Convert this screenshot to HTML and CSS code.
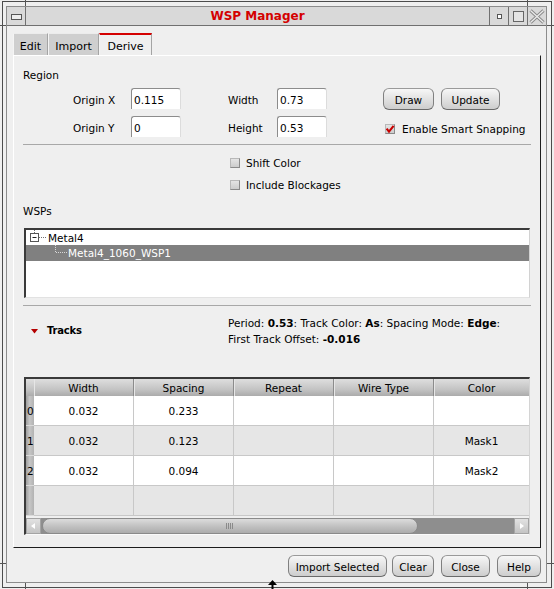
FILE: index.html
```html
<!DOCTYPE html>
<html>
<head>
<meta charset="utf-8">
<title>WSP Manager</title>
<link rel="stylesheet" href="styles.css">
</head>
<body>
<div class="frame">
  <div class="inner">
    <div class="titlebar">
      <div class="tb-btn tb-menu"><span class="menu-ico"></span></div>
      <div class="title">WSP Manager</div>
      <div class="tb-btn tb-side"><span class="min-ico"></span></div>
      <div class="tb-btn tb-side"><span class="max-ico"></span></div>
      <div class="tb-btn tb-side">
        <svg class="close-ico" width="16" height="15" viewBox="0 0 16 15">
          <path d="M1.5 1.5 L14.5 13.5 M14.5 1.5 L1.5 13.5" stroke="#8a8a8a" stroke-width="3.2" fill="none"/>
          <path d="M1.5 1.5 L14.5 13.5 M14.5 1.5 L1.5 13.5" stroke="#ececec" stroke-width="1.2" fill="none"/>
        </svg>
      </div>
    </div>

    <div class="content">
      <div class="tabs">
        <div class="tab tab-edit">Edit</div>
        <div class="tab tab-import">Import</div>
        <div class="tab tab-derive active">Derive</div>
      </div>

      <div class="panel">
        <div class="section-label region-label">Region</div>

        <div class="region">
          <span class="lbl">Origin X</span>
          <div class="fcell"><div class="field">0.115</div></div>
          <span class="lbl">Width</span>
          <div class="fcell"><div class="field">0.73</div></div>
          <div class="btns">
            <div class="btn btn-draw">Draw</div>
            <div class="btn btn-update">Update</div>
          </div>

          <span class="lbl">Origin Y</span>
          <div class="fcell"><div class="field">0</div></div>
          <span class="lbl">Height</span>
          <div class="fcell"><div class="field">0.53</div></div>
          <div class="snap">
            <span class="cb">
              <svg width="10" height="10" viewBox="0 0 10 10"><path d="M1.6 4.6 L4 7.6 L8.6 1.8" stroke="#c80000" stroke-width="2.1" fill="none"/></svg>
            </span>
            <span>Enable Smart Snapping</span>
          </div>
        </div>

        <div class="sep sep-1"></div>

        <div class="opt opt-first"><span class="cb"></span><span>Shift Color</span></div>
        <div class="opt"><span class="cb"></span><span>Include Blockages</span></div>

        <div class="section-label wsp-label">WSPs</div>

        <div class="tree">
          <div class="node n0">
            <svg class="tree-lines" width="20" height="15" viewBox="0 0 20 15">
              <path d="M8.5 0 V3" stroke="#707070" stroke-dasharray="1 1" fill="none"/>
              <rect x="4.5" y="3.5" width="8" height="8" fill="#fff" stroke="#555"/>
              <path d="M6.5 7.5 H10.5" stroke="#222" fill="none"/>
              <path d="M13 7.5 H20" stroke="#707070" stroke-dasharray="1 1" fill="none"/>
            </svg>
            <span class="node-text">Metal4</span>
          </div>
          <div class="node n1 sel">
            <svg class="tree-lines" width="42" height="16" viewBox="0 0 42 16">
              <path d="M29.5 0 V7.5 H41" stroke="#d8d8d8" stroke-dasharray="1 1" fill="none"/>
            </svg>
            <span class="node-text">Metal4_1060_WSP1</span>
          </div>
        </div>

        <div class="sep sep-2"></div>

        <div class="tracks">
          <div class="tracks-head">
            <svg class="tri" width="7" height="5" viewBox="0 0 7 5"><polygon points="0,0 7,0 3.5,4.5" fill="#b40000"/></svg>
            <b class="tracks-title">Tracks</b>
          </div>
          <div class="tracks-info">
            <div>Period: <b>0.53</b>: Track Color: <b>As</b>: Spacing Mode: <b>Edge</b>:</div>
            <div>First Track Offset: <b>-0.016</b></div>
          </div>
        </div>

        <div class="table">
          <div class="row thead">
            <div class="rh"></div>
            <div class="th">Width</div>
            <div class="th">Spacing</div>
            <div class="th">Repeat</div>
            <div class="th">Wire Type</div>
            <div class="th last">Color</div>
          </div>
          <div class="row tr">
            <div class="rh">0</div>
            <div class="td">0.032</div>
            <div class="td">0.233</div>
            <div class="td"></div>
            <div class="td"></div>
            <div class="td last"></div>
          </div>
          <div class="row tr alt">
            <div class="rh">1</div>
            <div class="td">0.032</div>
            <div class="td">0.123</div>
            <div class="td"></div>
            <div class="td"></div>
            <div class="td last">Mask1</div>
          </div>
          <div class="row tr">
            <div class="rh">2</div>
            <div class="td">0.032</div>
            <div class="td">0.094</div>
            <div class="td"></div>
            <div class="td"></div>
            <div class="td last">Mask2</div>
          </div>
          <div class="row tr alt">
            <div class="rh"></div>
            <div class="td"></div>
            <div class="td"></div>
            <div class="td"></div>
            <div class="td"></div>
            <div class="td last"></div>
          </div>
          <div class="hscroll">
            <div class="sb-arrow">
              <svg width="13" height="14" viewBox="0 0 13 14"><polygon points="4,7 8,4 8,10" fill="#ffffff"/></svg>
            </div>
            <div class="sb-track">
              <div class="sb-thumb"><span class="grip"></span></div>
            </div>
            <div class="sb-arrow">
              <svg width="13" height="14" viewBox="0 0 13 14"><polygon points="9,7 5,4 5,10" fill="#ffffff"/></svg>
            </div>
          </div>
        </div>
      </div>

      <div class="footer">
        <div class="btn fb-import">Import Selected</div>
        <div class="btn fb-clear">Clear</div>
        <div class="btn fb-close">Close</div>
        <div class="btn fb-help">Help</div>
      </div>
    </div>
  </div>
</div>

<span class="mark mark-tl"></span>
<span class="mark mark-tr"></span>
<span class="mark mark-bl"></span>
<span class="mark mark-br"></span>
<span class="mark mark-lt"></span>
<span class="mark mark-rt"></span>
<span class="mark mark-lb"></span>
<span class="mark mark-rb"></span>

<svg class="cursor" width="11" height="9" viewBox="0 0 11 9"><polygon points="5.5,0 10,5 6.5,5 6.5,9 4.5,9 4.5,5 1,5" fill="#000"/></svg>
</body>
</html>
```

FILE: styles.css
```css
* { box-sizing: border-box; }

html, body { margin: 0; padding: 0; }

body {
  width: 554px;
  height: 589px;
  background: #efefef;
  font-family: "DejaVu Sans", "Liberation Sans", sans-serif;
  font-size: 10.5px;
  color: #000;
  overflow: hidden;
  position: relative;
}

.frame {
  margin: 1px 2px 1px 2px;
  height: 587px;
  border: 1px solid #4c4c4c;
  padding: 4px 4px 4px 3px;
  background: #efefef;
}

.inner {
  height: 100%;
  border: 1px solid #8c8c8c;
  display: flex;
  flex-direction: column;
  background: #efefef;
}

/* ---------- title bar ---------- */
.titlebar {
  display: flex;
  flex: none;
  height: 19px;
  background: #d9d9d9;
  border-bottom: 1px solid #707070;
}

.tb-btn {
  width: 19px;
  height: 18px;
  flex: none;
  display: flex;
  align-items: center;
  justify-content: center;
}

.tb-menu { border-right: 1px solid #707070; }
.tb-side { border-left: 1px solid #707070; }

.menu-ico {
  width: 11px;
  height: 6px;
  border: 1px solid #555;
  background: #ececec;
  margin-top: 1px;
}

.min-ico {
  width: 5px;
  height: 5px;
  border: 1px solid #555;
  background: #fff;
  margin-top: 1px;
}

.max-ico {
  width: 11px;
  height: 11px;
  border: 1px solid #666;
  background: #e4e4e4;
  margin-top: 1px;
}

.title {
  flex: 1;
  text-align: center;
  color: #d40000;
  font-weight: bold;
  font-size: 12px;
  line-height: 18px;
}

/* ---------- content ---------- */
.content {
  flex: 1;
  display: flex;
  flex-direction: column;
  padding: 7px 5px 0 6px;
}

.tabs {
  display: flex;
  height: 22px;
  flex: none;
}

.tab {
  height: 22px;
  padding-top: 6px;
  text-align: center;
  font-size: 11px;
  line-height: 14px;
  background: #cfcfcf;
  border-top: 1px solid #ececec;
  border-left: 1px solid #f4f4f4;
  border-right: 1px solid #a4a4a4;
}

.tab-edit { width: 35px; }
.tab-import { width: 51px; }
.tab-derive { width: 53px; }

.tab.active {
  background: #efefef;
  border-top: 2px solid #d40000;
  padding-top: 5px;
}

.panel {
  height: 493px;
  flex: none;
  border-top: 1px solid #ffffff;
  border-left: 1px solid #ffffff;
  border-right: 1px solid #1c1c1c;
  border-bottom: 1px solid #1c1c1c;
  padding: 0 10px 0 9px;
  display: flex;
  flex-direction: column;
}

.section-label {
  line-height: 15px;
  height: 15px;
}

.region-label { margin-top: 12px; }
.wsp-label { margin-top: 8px; }

/* ---------- region grid ---------- */
.region {
  margin-top: 5px;
  margin-left: 50px;
  display: grid;
  grid-template-columns: 58px 97px 49px 106px auto;
  grid-template-rows: 22px 22px;
  row-gap: 6px;
  align-items: start;
}

.lbl {
  line-height: 20px;
  padding-top: 2px;
}

.field {
  width: 50px;
  height: 21px;
  background: #fff;
  border-top: 1px solid #8c8c8c;
  border-left: 1px solid #8c8c8c;
  border-right: 1px solid #dcdcdc;
  border-radius: 3px 3px 0 0;
  padding: 2px 0 0 2px;
  line-height: 18px;
}

.btns {
  display: flex;
}

.btn {
  height: 22px;
  border: 1px solid #808080;
  border-top-color: #9a9a9a;
  border-bottom-color: #6a6a6a;
  border-radius: 6px;
  background: linear-gradient(#f7f7f7, #e4e4e4 45%, #cdcdcd);
  text-align: center;
  line-height: 20px;
  padding-top: 1px;
  flex: none;
}

.btn-draw { width: 51px; }
.btn-update { width: 59px; margin-left: 7px; }

.snap {
  display: flex;
  align-items: center;
  height: 22px;
  padding-top: 3px;
  padding-left: 2px;
}

.cb {
  width: 10px;
  height: 10px;
  flex: none;
  background: linear-gradient(#e4e4e4, #cccccc);
  border-top: 1px solid #b8b8b8;
  border-left: 1px solid #b8b8b8;
  border-right: 1px solid #8a8a8a;
  border-bottom: 1px solid #8a8a8a;
  position: relative;
}

.cb svg {
  position: absolute;
  left: -1px;
  top: -1px;
}

.snap .cb { margin-right: 7px; }

/* ---------- separators ---------- */
.sep {
  height: 1px;
  background: #a8a8a8;
  margin-right: -1px;
  flex: none;
}

.sep-1 { margin-top: 6px; }
.sep-2 { margin-top: 7px; }

/* ---------- options ---------- */
.opt {
  display: flex;
  align-items: center;
  height: 22px;
  padding-left: 207px;
}

.opt-first { margin-top: 7px; }
.opt .cb { margin-right: 6px; }

/* ---------- tree ---------- */
.tree {
  margin: 9px 0 0 1px;
  height: 70px;
  flex: none;
  background: #fff;
  border-top: 2px solid #3a3a3a;
  border-left: 2px solid #3a3a3a;
  border-right: 1px solid #d2d2d2;
  border-bottom: 1px solid #e2e2e2;
}

.node {
  display: flex;
  align-items: center;
}

.n0 { height: 15px; }
.n0 .node-text { margin-left: 2px; }

.n1 { height: 16px; }

.sel {
  background: #808080;
  color: #ffffff;
}

.tree-lines { flex: none; display: block; }

/* ---------- tracks ---------- */
.tracks {
  display: flex;
  margin-top: 9px;
  line-height: 16px;
}

.tracks-head {
  width: 205px;
  flex: none;
  display: flex;
  align-items: center;
}

.tracks-head {
  padding-left: 8px;
}

.tracks-title {
  font-size: 10px;
  letter-spacing: -0.2px;
}

.tri { margin-right: 9px; display: block; }

/* ---------- table ---------- */
.table {
  margin: 30px 0 0 1px;
  flex: none;
  border-top: 2px solid #3a3a3a;
  border-left: 2px solid #3a3a3a;
  border-right: 1px solid #d4d4d4;
  border-bottom: 1px solid #fafafa;
}

.row {
  display: grid;
  grid-template-columns: 8px 100px 100px 100px 100px 95px;
}

.thead { height: 17px; }

.th {
  background: linear-gradient(#dedede, #c4c4c4 60%, #ababab);
  border-right: 1px solid #8c8c8c;
  box-shadow: inset 1px 0 0 #e6e6e6;
  text-align: center;
  line-height: 15px;
  padding-top: 2px;
}

.th.last { border-right: none; }

.thead .rh {
  background: linear-gradient(#dedede, #c4c4c4 60%, #ababab);
}

.tr { height: 30px; }

.td {
  background: #ffffff;
  border-right: 1px solid #c8c8c8;
  border-bottom: 1px solid #c8c8c8;
  text-align: center;
  line-height: 26px;
  padding-top: 2px;
}

.alt .td { background: #e6e6e6; }
.td.last { border-right: none; }

.rh {
  background: linear-gradient(90deg, #9e9e9e, #c6c6c6 45%, #b2b2b2);
  border-bottom: 1px solid #dadada;
  padding: 2px 0 0 1px;
  line-height: 26px;
  overflow: visible;
  white-space: nowrap;
}

.thead .rh { border-bottom: none; }

.hscroll {
  display: flex;
  height: 16px;
  margin-top: 2px;
}

.sb-arrow {
  width: 15px;
  flex: none;
  background: linear-gradient(#e2e2e2, #c4c4c4);
  border: 1px solid #a4a4a4;
}

.sb-arrow svg { display: block; }

.sb-track {
  flex: 1;
  background: #8e8e8e;
  padding-left: 1px;
  display: flex;
}

.sb-thumb {
  width: 376px;
  height: 16px;
  border-radius: 8px;
  border: 1px solid #8a8a8a;
  background: linear-gradient(#dcdcdc, #c2c2c2 50%, #acacac);
  display: flex;
  align-items: center;
  justify-content: center;
}

.grip {
  width: 8px;
  height: 6px;
  background: repeating-linear-gradient(90deg, #8a8a8a 0 1px, transparent 1px 2px);
}

/* ---------- footer ---------- */
.footer {
  display: flex;
  justify-content: flex-end;
  margin-top: 7px;
}

.fb-import { width: 99px; }
.fb-clear { width: 42px; margin-left: 5px; }
.fb-close { width: 49px; margin-left: 7px; }
.fb-help { width: 44px; margin-left: 7px; }

/* ---------- window frame handle marks (overlay on frame) ---------- */
.mark {
  position: absolute;
  background: #555;
}

.mark-tl { left: 25px; top: 0; width: 1px; height: 6px; }
.mark-tr { left: 527px; top: 0; width: 1px; height: 6px; }
.mark-bl { left: 25px; top: 583px; width: 1px; height: 6px; }
.mark-br { left: 527px; top: 583px; width: 1px; height: 6px; }
.mark-lt { left: 0; top: 25px; width: 6px; height: 1px; }
.mark-rt { left: 547px; top: 25px; width: 7px; height: 1px; }
.mark-lb { left: 0; top: 563px; width: 6px; height: 1px; }
.mark-rb { left: 547px; top: 563px; width: 7px; height: 1px; }

.cursor {
  position: absolute;
  left: 267px;
  top: 580px;
}
```
